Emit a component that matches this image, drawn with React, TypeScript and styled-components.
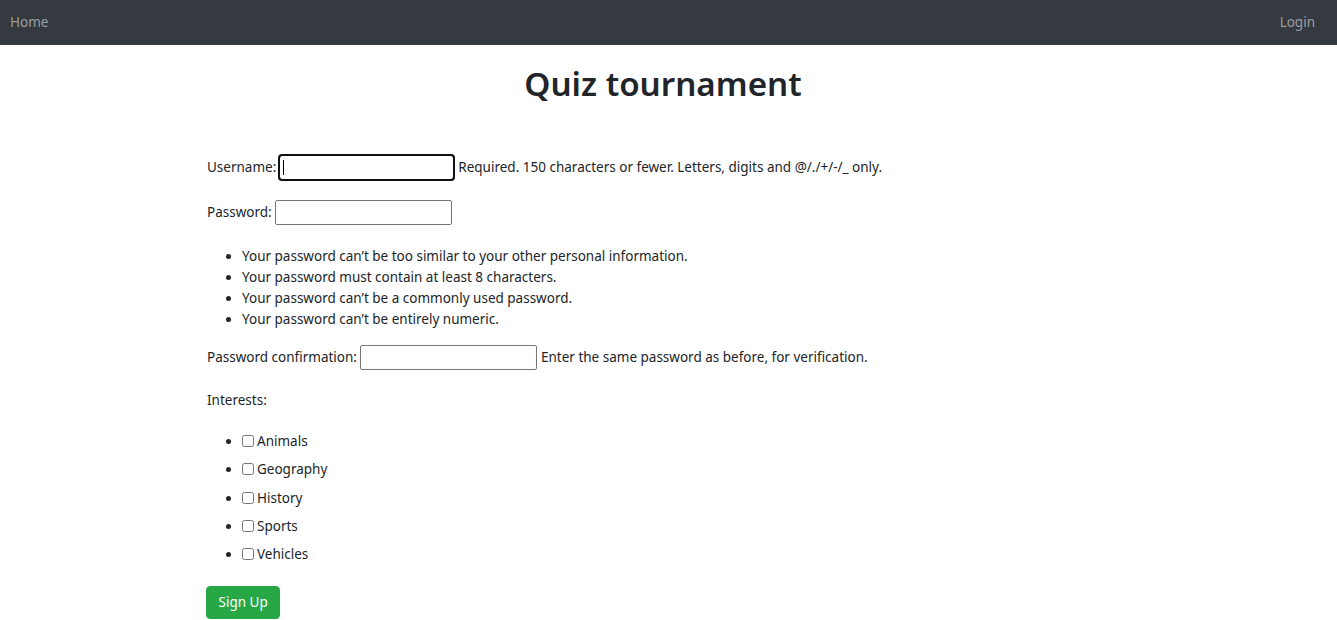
import React from "react";
import styled, { createGlobalStyle } from "styled-components";

const Global = createGlobalStyle`
  html, body { margin: 0; padding: 0; background: #fff; }
  body {
    font-family: "Noto Sans", "Open Sans", sans-serif;
    font-size: 13.5px;
    line-height: 21px;
    color: #212529;
  }
  * { box-sizing: border-box; }
`;

const Nav = styled.nav`
  height: 45px;
  background: #343a40;
  display: flex;
  align-items: center;
  justify-content: space-between;
  padding: 0 22px 0 10px;
`;

const NavLink = styled.a`
  color: #9a9da0;
  font-size: 13.5px;
  text-decoration: none;
`;

const Container = styled.main`
  width: 912px;
  margin-left: 207px;
`;

const Title = styled.h1`
  margin: 18px 0 50px;
  text-align: center;
  font-size: 33.2px;
  line-height: 42px;
  font-weight: 600;
  color: #212529;
`;

const Row = styled.div<{ $mt?: number }>`
  display: flex;
  align-items: center;
  height: 25px;
  margin-top: ${(p) => p.$mt ?? 0}px;
  white-space: nowrap;
`;

const Label = styled.label`
  margin-right: 3px;
`;

const Help = styled.span`
  margin-left: 4px;
`;

const Field = styled.div`
  position: relative;
  display: inline-flex;
`;

const Input = styled.input<{ $focused?: boolean }>`
  width: 177px;
  height: 25px;
  border: 1px solid #767676;
  border-radius: 2px;
  padding: 1px 2px;
  font: inherit;
  background: #fff;
  ${(p) =>
    p.$focused &&
    `
    width: 175px;
    outline: 2px solid #101010;
    outline-offset: -1px;
    border-radius: 3px;
  `}
`;

const Caret = styled.span`
  position: absolute;
  left: 4px;
  top: 5px;
  width: 1px;
  height: 15px;
  background: #000;
`;

const Rules = styled.ul<{ $mt?: number }>`
  margin: ${(p) => p.$mt ?? 0}px 0 0;
  padding-left: 35px;
  li { line-height: 21px; }
`;

const Choices = styled.ul`
  margin: 14px 0 0;
  padding-left: 35px;
`;

const Choice = styled.li`
  height: 28.25px;
  line-height: 28.25px;
`;

const Check = styled.input`
  width: 12px;
  height: 12px;
  margin: 0 3px 0 0;
  vertical-align: -1px;
`;

const Button = styled.button`
  margin-top: 18px;
  margin-left: -1px;
  background: #28a745;
  border: 1px solid #28a745;
  color: #fff;
  font: inherit;
  font-size: 13.5px;
  line-height: 21px;
  padding: 5px 11.5px;
  border-radius: 4px;
  height: 33px;
`;

const rules = [
  "Your password can\u2019t be too similar to your other personal information.",
  "Your password must contain at least 8 characters.",
  "Your password can\u2019t be a commonly used password.",
  "Your password can\u2019t be entirely numeric.",
];

const interests = ["Animals", "Geography", "History", "Sports", "Vehicles"];

export default function App() {
  return (
    <>
      <Global />
      <Nav>
        <NavLink href="#">Home</NavLink>
        <NavLink href="#">Login</NavLink>
      </Nav>
      <Container>
        <Title>Quiz tournament</Title>
        <form>
          <Row>
            <Label>Username:</Label>
            <Field>
              <Input $focused type="text" />
              <Caret />
            </Field>
            <Help>Required. 150 characters or fewer. Letters, digits and @/./+/-/_ only.</Help>
          </Row>
          <Row $mt={20}>
            <Label>Password:</Label>
            <Input type="password" />
          </Row>
          <Rules $mt={21}>
            {rules.map((r) => (
              <li key={r}>{r}</li>
            ))}
          </Rules>
          <Row $mt={15}>
            <Label>Password confirmation:</Label>
            <Input type="password" />
            <Help>Enter the same password as before, for verification.</Help>
          </Row>
          <Row $mt={18}>
            <Label>Interests:</Label>
          </Row>
          <Choices>
            {interests.map((i) => (
              <Choice key={i}>
                <Check type="checkbox" />
                {i}
              </Choice>
            ))}
          </Choices>
          <Button type="button">Sign Up</Button>
        </form>
      </Container>
    </>
  );
}
